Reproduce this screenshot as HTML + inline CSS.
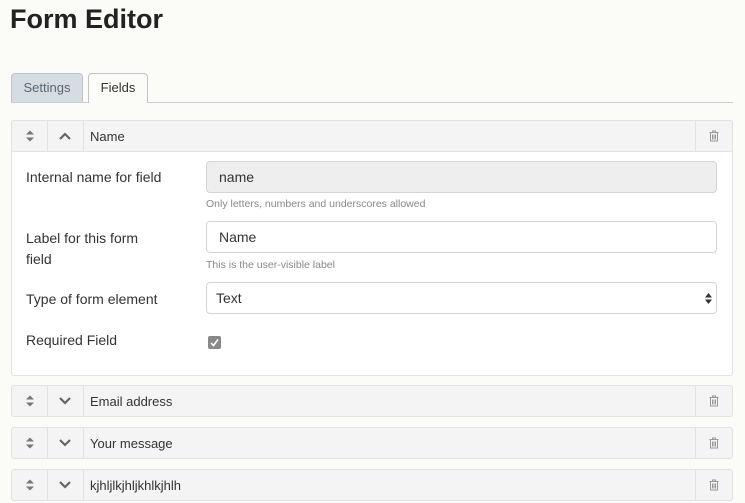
<!DOCTYPE html><html><head><style>
body{margin:0;background:#fbfbf8;font-family:"Liberation Sans",sans-serif;color:#333;width:745px;height:503px;overflow:hidden;position:relative}
.a{position:absolute}
h1{position:absolute;left:10px;top:4px;margin:0;font-size:27px;font-weight:bold;color:#222}
.tab{position:absolute;top:73px;height:29px;border:1px solid #bcc5cc;border-bottom:none;border-radius:4px 4px 0 0;font-size:13px;line-height:28px;text-align:center;box-sizing:border-box}
.hdr{position:absolute;left:11px;width:722px;height:32px;background:#f4f4f4;border:1px solid #e2e2e2;border-radius:3px;box-sizing:border-box;font-size:13px}
.hdr .c1{position:absolute;left:0;top:0;width:35px;height:30px;border-right:1px solid #e2e2e2}
.hdr .c2{position:absolute;left:35px;top:0;width:36px;height:30px;border-right:1px solid #e2e2e2}
.hdr .c3{position:absolute;right:0;top:0;width:36px;height:30px;border-left:1px solid #e2e2e2}
.hdr .t{position:absolute;left:78px;top:8px}
.hdr svg{position:absolute;left:50%;top:50%;transform:translate(-50%,-50%)}
.lbl{position:absolute;left:26px;font-size:14px;color:#333;line-height:21px}
.inp{position:absolute;left:206px;width:511px;height:32px;border:1px solid #d4d4d4;border-radius:4px;box-sizing:border-box;font-size:14px;padding-left:12px;line-height:30px;background:#fff}
.help{position:absolute;left:206px;font-size:10.5px;color:#888}
</style></head><body>
<h1>Form Editor</h1>
<div class="a" style="left:11px;top:102px;width:722px;height:1px;background:#c8d0d6"></div>
<div class="tab" style="left:11px;width:72px;background:#d5dde3;color:#5a6670">Settings</div>
<div class="tab" style="left:88px;width:60px;background:#fbfbf8;height:30px;color:#333">Fields</div>
<div class="a" style="left:11px;top:120px;width:722px;height:256px;border:1px solid #e2e2e2;border-radius:3px;background:#fff;box-sizing:border-box"></div>
<div class="hdr" style="top:120px"><div class="c1"><svg width="8" height="11" viewBox="0 0 8 11"><path d="M4 0L8 4H0Z M4 11L8 7H0Z" fill="#777"/></svg></div><div class="c2"><svg width="12" height="8" viewBox="0 0 12 8"><path d="M1 7L6 2L11 7" stroke="#666" stroke-width="2.2" fill="none"/></svg></div><div class="t">Name</div><div class="c3"><svg width="10" height="12" viewBox="0 0 10 12"><path d="M0.5 2.5H9.5M3.5 2.5V1H6.5V2.5M1.5 2.5V11H8.5V2.5M3.5 4.5V9.5M5 4.5V9.5M6.5 4.5V9.5" stroke="#999" stroke-width="1" fill="none"/></svg></div></div>
<div class="lbl" style="top:167px">Internal name for field</div>
<div class="inp" style="top:161px;background:#eee">name</div>
<div class="help" style="top:198px">Only letters, numbers and underscores allowed</div>
<div class="lbl" style="top:228px">Label for this form<br>field</div>
<div class="inp" style="top:221px">Name</div>
<div class="help" style="top:259px">This is the user-visible label</div>
<div class="lbl" style="top:289px">Type of form element</div>
<div class="inp" style="top:282px;padding-left:9px">Text<svg class="a" style="right:4px;top:10px" width="7" height="11" viewBox="0 0 7 11"><path d="M3.5 0L7 4.5H0Z M3.5 11L7 6.5H0Z" fill="#333"/></svg></div>
<div class="lbl" style="top:330px">Required Field</div>
<div class="a" style="left:208px;top:336px;width:13px;height:13px;background:#888;border-radius:2px"><svg width="13" height="13" viewBox="0 0 13 13"><path d="M3 7L5.5 9.5L10 3.5" stroke="#fff" stroke-width="1.6" fill="none"/></svg></div>
<div class="hdr" style="top:385px"><div class="c1"><svg width="8" height="11" viewBox="0 0 8 11"><path d="M4 0L8 4H0Z M4 11L8 7H0Z" fill="#777"/></svg></div><div class="c2"><svg width="12" height="8" viewBox="0 0 12 8"><path d="M1 1L6 6L11 1" stroke="#666" stroke-width="2.2" fill="none"/></svg></div><div class="t">Email address</div><div class="c3"><svg width="10" height="12" viewBox="0 0 10 12"><path d="M0.5 2.5H9.5M3.5 2.5V1H6.5V2.5M1.5 2.5V11H8.5V2.5M3.5 4.5V9.5M5 4.5V9.5M6.5 4.5V9.5" stroke="#999" stroke-width="1" fill="none"/></svg></div></div>
<div class="hdr" style="top:427px"><div class="c1"><svg width="8" height="11" viewBox="0 0 8 11"><path d="M4 0L8 4H0Z M4 11L8 7H0Z" fill="#777"/></svg></div><div class="c2"><svg width="12" height="8" viewBox="0 0 12 8"><path d="M1 1L6 6L11 1" stroke="#666" stroke-width="2.2" fill="none"/></svg></div><div class="t">Your message</div><div class="c3"><svg width="10" height="12" viewBox="0 0 10 12"><path d="M0.5 2.5H9.5M3.5 2.5V1H6.5V2.5M1.5 2.5V11H8.5V2.5M3.5 4.5V9.5M5 4.5V9.5M6.5 4.5V9.5" stroke="#999" stroke-width="1" fill="none"/></svg></div></div>
<div class="hdr" style="top:469px"><div class="c1"><svg width="8" height="11" viewBox="0 0 8 11"><path d="M4 0L8 4H0Z M4 11L8 7H0Z" fill="#777"/></svg></div><div class="c2"><svg width="12" height="8" viewBox="0 0 12 8"><path d="M1 1L6 6L11 1" stroke="#666" stroke-width="2.2" fill="none"/></svg></div><div class="t">kjhljlkjhljkhlkjhlh</div><div class="c3"><svg width="10" height="12" viewBox="0 0 10 12"><path d="M0.5 2.5H9.5M3.5 2.5V1H6.5V2.5M1.5 2.5V11H8.5V2.5M3.5 4.5V9.5M5 4.5V9.5M6.5 4.5V9.5" stroke="#999" stroke-width="1" fill="none"/></svg></div></div>
</body></html>
